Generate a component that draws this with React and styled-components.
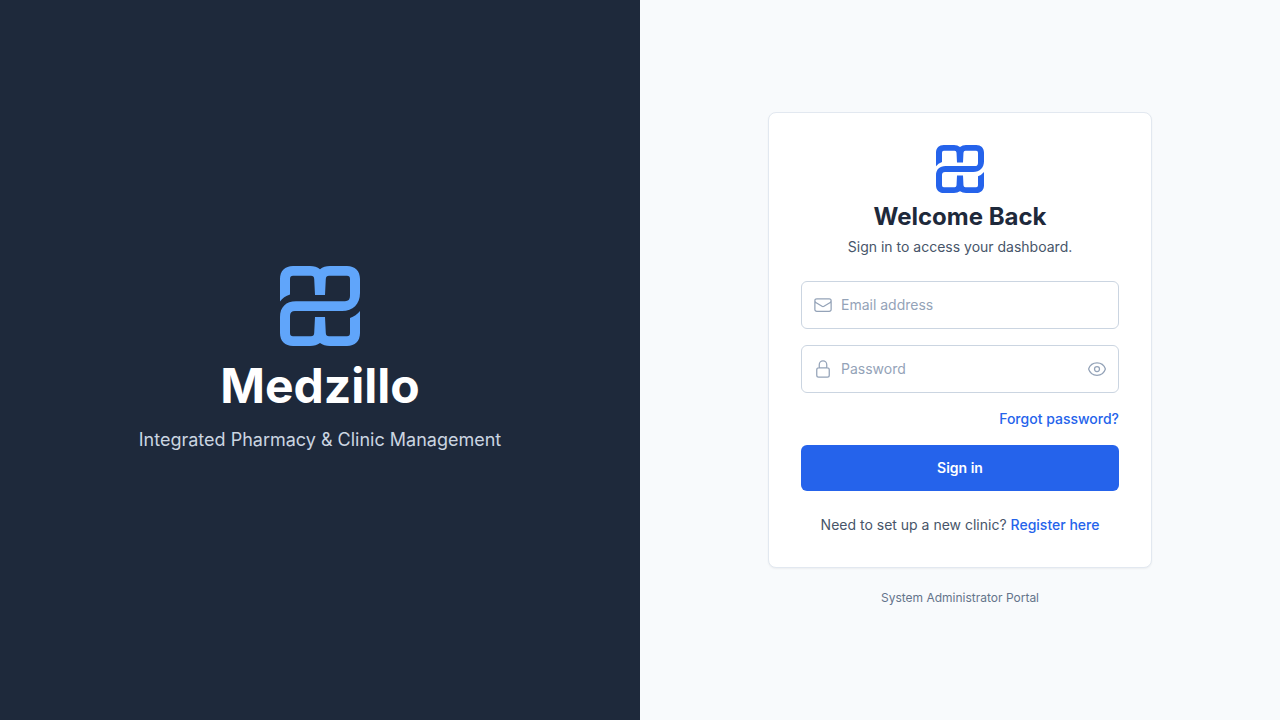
import React, { useState } from "react";
import styled, { createGlobalStyle } from "styled-components";
import { HiOutlineEnvelope, HiOutlineLockClosed, HiOutlineEye, HiOutlineEyeSlash } from "react-icons/hi2";

const GlobalStyle = createGlobalStyle`
  *, *::before, *::after { box-sizing: border-box; }
  body {
    margin: 0;
    font-family: Inter, "Liberation Sans", sans-serif;
    background: #f8fafc;
    color: #1e293b;
  }
  h1, h2, p { margin: 0; }
  button, input { font: inherit; }
`;

const Page = styled.div`
  display: flex;
  min-height: 100vh;
`;

const BrandPanel = styled.section`
  flex: 1;
  display: flex;
  flex-direction: column;
  align-items: center;
  justify-content: center;
  background: #1e293b;
  text-align: center;
  @media (max-width: 800px) { display: none; }
`;

const BrandName = styled.h1`
  margin-top: 16px;
  color: #fff;
  font-size: 48px;
  line-height: 48px;
  font-weight: 700;
`;

const Tagline = styled.p`
  margin-top: 16px;
  color: #cbd5e1;
  font-size: 18px;
  line-height: 28px;
`;

const LoginPanel = styled.main`
  flex: 1;
  display: flex;
  flex-direction: column;
  align-items: center;
  justify-content: center;
`;

const Card = styled.div`
  width: 100%;
  max-width: 384px;
  padding: 32px;
  background: #fff;
  border: 1px solid #e2e8f0;
  border-radius: 8px;
  box-shadow: 0 1px 2px rgba(0, 0, 0, 0.05);
`;

const CardHeader = styled.header`
  display: flex;
  flex-direction: column;
  align-items: center;
  text-align: center;
`;

const Title = styled.h2`
  margin-top: 8px;
  font-size: 24px;
  line-height: 32px;
  font-weight: 700;
`;

const Text = styled.p`
  margin-top: ${(p) => p.$gap}px;
  color: #475569;
  font-size: 14px;
  line-height: 20px;
  text-align: center;
`;

const Form = styled.form`
  display: flex;
  flex-direction: column;
  gap: 16px;
  margin-top: 24px;
`;

const Field = styled.label`
  display: flex;
  align-items: center;
  gap: 8px;
  height: 48px;
  padding: 0 11px;
  border: 1px solid #cbd5e1;
  border-radius: 6px;
  color: #94a3b8;
  &:focus-within { border-color: #2563eb; }
  svg { flex: none; display: block; }
`;

const Input = styled.input`
  flex: 1;
  min-width: 0;
  height: 20px;
  padding: 0;
  border: 0;
  outline: 0;
  background: transparent;
  color: #1e293b;
  font-size: 14px;
  line-height: 20px;
  &::placeholder { color: #94a3b8; opacity: 1; }
`;

const IconButton = styled.button`
  padding: 0;
  border: 0;
  background: none;
  color: inherit;
  cursor: pointer;
`;

const Link = styled.a`
  color: #2563eb;
  font-size: 14px;
  line-height: 20px;
  font-weight: 500;
  text-decoration: none;
  &:hover { text-decoration: underline; }
`;

const ForgotRow = styled.div`
  display: flex;
  justify-content: flex-end;
`;

const SubmitButton = styled.button`
  height: 46px;
  border: 0;
  border-radius: 6px;
  background: #2563eb;
  color: #fff;
  font-size: 14px;
  line-height: 20px;
  font-weight: 600;
  cursor: pointer;
  &:hover { background: #1d4ed8; }
`;

const PortalLink = styled.a`
  margin-top: 20px;
  color: #64748b;
  font-size: 12px;
  line-height: 20px;
  text-decoration: none;
`;

function Logo({ size, color }) {
  return (
    <svg width={size} height={size} viewBox="0 0 80 80" fill={color} aria-hidden="true">
      <path
        fillRule="evenodd"
        d="M0 35.5V13C0 5 5 0 13 0H30Q36 0 40 3.2Q44 0 50 0H67C75 0 80 5 80 13V27C80 38 73 45 62 45H15Q10 45 10 50V67Q10 70.3 13 70.3H31Q34 70.3 34.2 67L35 51H45L45.8 67Q46 70.3 49 70.3H67Q70 70.3 70 67V52Q76 50 80 45V67C80 75 75 80 67 80H50Q44 80 40 77Q36 80 30 80H13C5 80 0 75 0 67V51C0 41 6 35.2 16 35.2H65Q70 35.2 70 30V13Q70 9.7 67 9.7H49Q46 9.7 45.8 13L45 29H35L34.2 13Q34 9.7 31 9.7H13Q10 9.7 10 13V28.5Q3.5 30.5 0 35.5Z"
      />
    </svg>
  );
}

export default function App() {
  const [visible, setVisible] = useState(false);
  return (
    <Page>
      <GlobalStyle />
      <BrandPanel>
        <Logo size={80} color="#60a5fa" />
        <BrandName>Medzillo</BrandName>
        <Tagline>Integrated Pharmacy &amp; Clinic Management</Tagline>
      </BrandPanel>
      <LoginPanel>
        <Card>
          <CardHeader>
            <Logo size={48} color="#2563eb" />
            <Title>Welcome Back</Title>
            <Text $gap={4}>Sign in to access your dashboard.</Text>
          </CardHeader>
          <Form onSubmit={(e) => e.preventDefault()}>
            <Field htmlFor="email">
              <HiOutlineEnvelope size={20} />
              <Input id="email" type="email" aria-label="Email address" placeholder="Email address" />
            </Field>
            <Field htmlFor="password">
              <HiOutlineLockClosed size={20} />
              <Input
                id="password"
                type={visible ? "text" : "password"}
                aria-label="Password"
                placeholder="Password"
              />
              <IconButton
                type="button"
                aria-label={visible ? "Hide password" : "Show password"}
                onClick={() => setVisible(!visible)}
              >
                {visible ? <HiOutlineEyeSlash size={20} /> : <HiOutlineEye size={20} />}
              </IconButton>
            </Field>
            <ForgotRow>
              <Link href="#forgot">Forgot password?</Link>
            </ForgotRow>
            <SubmitButton type="submit">Sign in</SubmitButton>
          </Form>
          <Text $gap={24}>
            Need to set up a new clinic? <Link href="#register">Register here</Link>
          </Text>
        </Card>
        <PortalLink href="#admin">System Administrator Portal</PortalLink>
      </LoginPanel>
    </Page>
  );
}
